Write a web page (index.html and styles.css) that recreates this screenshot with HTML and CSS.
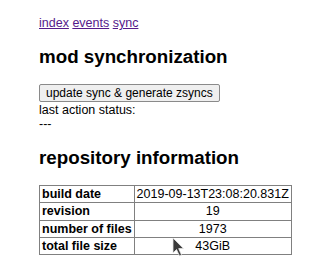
FILE: index.html
```html
<!DOCTYPE html>
<html lang="en">
<head>
    <meta charset="UTF-8">
    <title>mod synchronization</title>
    <link rel="stylesheet" href="styles.css">
</head>
<body>
    <div class="page">
        <nav class="nav">
            <a href="#">index</a>
            <a href="#">events</a>
            <a href="#">sync</a>
        </nav>

        <h2>mod synchronization</h2>
        <button class="btn">update sync &amp; generate zsyncs</button>
        <div class="status">
            <div>last action status:</div>
            <div>---</div>
        </div>

        <h2>repository information</h2>
        <table class="info">
            <tr><th>build date</th><td>2019-09-13T23:08:20.831Z</td></tr>
            <tr><th>revision</th><td>19</td></tr>
            <tr><th>number of files</th><td>1973</td></tr>
            <tr><th>total file size</th><td>43GiB</td></tr>
        </table>
    </div>

    <!-- mouse pointer seen in the screenshot -->
    <svg class="cursor" width="14" height="20" viewBox="0 0 14 20">
        <path d="M1 1 L1 16 L4.5 12.5 L7.5 19 L9.5 18 L6.7 11.6 L11.5 11.6 Z" fill="#3a3a3a" stroke="#e8e8e8" stroke-width="0.8"/>
    </svg>
</body>
</html>
```

FILE: styles.css
```css
body {
    margin: 0;
    font-family: "Liberation Sans", Arial, sans-serif;
    font-size: 12.5px;
    line-height: 14px;
    color: #000;
    background: #fff;
}

.page {
    padding: 16px 18px 0 39px;
}

.nav a {
    color: #551a8b;
}

h2 {
    font-size: 18.75px;
    line-height: 22px;
    margin: 16px 0;
}

.btn {
    display: block;
    font-family: "Liberation Sans", Arial, sans-serif;
    font-size: 12px;
    line-height: 14px;
    height: 18px;
    padding: 1px 6px;
    margin-bottom: 1px;
    color: #000;
    background: #efefef;
    border: 1px solid #8a8a8a;
    border-radius: 2px;
}

.info {
    border-collapse: collapse;
    border: 1px solid #808080;
    white-space: nowrap;
}

.info th,
.info td {
    border: 1px solid #808080;
    padding: 1px 2px;
    line-height: 14.3px;
}

.info th {
    text-align: left;
}

.info td {
    text-align: center;
}

.cursor {
    position: absolute;
    left: 172px;
    top: 237px;
}
```
